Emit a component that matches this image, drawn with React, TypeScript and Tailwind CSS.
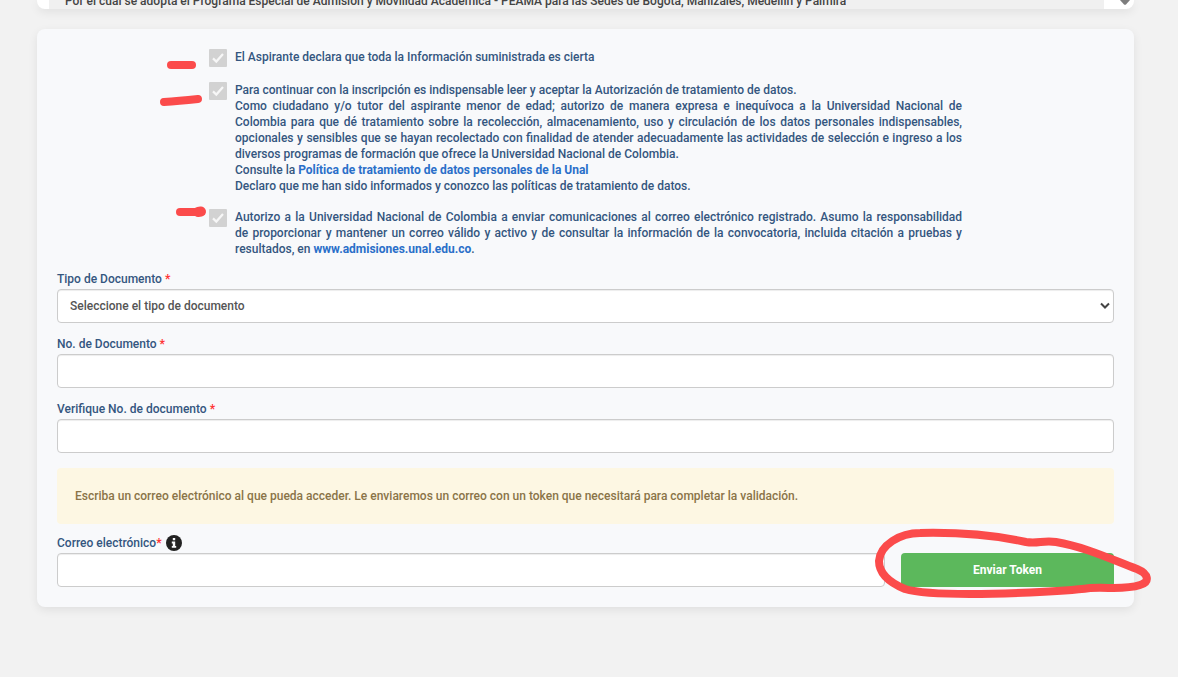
import { useState } from 'react';
import type { ReactNode } from 'react';

const fieldClass =
    'h-[34px] w-full rounded border border-[#ccc] bg-white text-[#555] shadow-[inset_0_1px_1px_rgba(0,0,0,0.075)]';

interface ConsentProps {
    id: string;
    children: ReactNode;
    mark: ReactNode;
}

function Consent({ id, children, mark }: ConsentProps) {
    return (
        <div className="relative flex items-start gap-2">
            {mark}
            <span className="relative size-[18px] shrink-0">
                <input
                    id={id}
                    type="checkbox"
                    defaultChecked
                    disabled
                    className="block size-[18px] appearance-none rounded-[1px] bg-[#d2d2d2]"
                />
                <svg viewBox="0 0 18 18" className="pointer-events-none absolute inset-0 size-[18px]" fill="none">
                    <path d="M4 9.4 L7.3 12.6 L14 5" stroke="#f7f7f7" strokeWidth="2.2" />
                </svg>
            </span>
            <div className="min-w-0 flex-1 text-justify">{children}</div>
        </div>
    );
}

interface FieldLabelProps {
    htmlFor: string;
    children: ReactNode;
}

function FieldLabel({ htmlFor, children }: FieldLabelProps) {
    return (
        <label htmlFor={htmlFor} className="mb-0.5 block">
            {children} <span className="font-bold text-[#f33]">*</span>
        </label>
    );
}

export default function App() {
    const [documentType, setDocumentType] = useState('');
    const [documentNumber, setDocumentNumber] = useState('');
    const [documentCheck, setDocumentCheck] = useState('');
    const [email, setEmail] = useState('');

    return (
        <main className="min-h-screen bg-[#f2f2f2] pr-11 pb-8 pl-[37px] font-['Roboto',sans-serif] text-[12px] leading-4 font-medium text-[#34567f]">
            {/* Selected call, cut by the top of the page */}
            <section className="flex h-[9px] items-end rounded-b-lg bg-white shadow-[0_3px_10px_rgba(0,0,0,0.08)]">
                <div className="ml-3 flex h-[9px] min-w-0 flex-1 items-end overflow-hidden bg-[#f0f0f0] px-4 text-[#444]">
                    <p className="truncate">
                        Por el cual se adopta el Programa Especial de Admisión y Movilidad Académica - PEAMA para las Sedes de Bogotá, Manizales, Medellín y Palmira
                    </p>
                </div>
                <div className="flex h-[9px] w-[30px] items-start justify-end pr-1">
                    <svg width="10" height="5" viewBox="0 0 10 5">
                        <path d="M0 0 H10 L6 4.5 Q5 5.2 4 4.5 Z" fill="#7d7d7d" />
                    </svg>
                </div>
            </section>

            <form
                onSubmit={(e) => e.preventDefault()}
                className="mt-5 rounded-lg bg-[#f8f9fb] p-5 shadow-[0_3px_10px_rgba(0,0,0,0.08)]"
            >
                {/* Consents */}
                <div className="flex flex-col gap-[15px] px-[152px]">
                    <Consent
                        id="truth"
                        mark={
                            <svg width="32" height="12" viewBox="0 0 32 12" className="absolute top-[10px] -left-[43px]">
                                <path d="M5 6 H26" stroke="#fb4b4b" strokeWidth="8" strokeLinecap="round" />
                            </svg>
                        }
                    >
                        <label htmlFor="truth">El Aspirante declara que toda la Información suministrada es cierta</label>
                    </Consent>
                    <Consent
                        id="privacy"
                        mark={
                            <svg width="46" height="14" viewBox="0 0 46 14" className="absolute top-[12px] -left-[51px]">
                                <path d="M6 8 Q20 7 40 5" stroke="#fb4b4b" strokeWidth="8" strokeLinecap="round" fill="none" />
                            </svg>
                        }
                    >
                        <label htmlFor="privacy">
                            Para continuar con la inscripción es indispensable leer y aceptar la Autorización de tratamiento de datos.
                        </label>
                        <p>
                            Como ciudadano y/o tutor del aspirante menor de edad; autorizo de manera expresa e inequívoca a la Universidad Nacional de Colombia para que dé tratamiento sobre la recolección, almacenamiento, uso y circulación de los datos personales indispensables, opcionales y sensibles que se hayan recolectado con finalidad de atender adecuadamente las actividades de selección e ingreso a los diversos programas de formación que ofrece la Universidad Nacional de Colombia.
                        </p>
                        <p>
                            Consulte la{' '}
                            <a href="#politica" className="font-bold text-[#2a6fc9]">
                                Política de tratamiento de datos personales de la Unal
                            </a>
                        </p>
                        <p>Declaro que me han sido informados y conozco las políticas de tratamiento de datos.</p>
                    </Consent>
                    <Consent
                        id="mailing"
                        mark={
                            <svg width="34" height="14" viewBox="0 0 34 14" className="absolute -top-1 -left-[35px]">
                                <path d="M6 7 H24" stroke="#fb4b4b" strokeWidth="8" strokeLinecap="round" />
                                <path d="M24 7 L27 6.5" stroke="#fb4b4b" strokeWidth="10" strokeLinecap="round" />
                            </svg>
                        }
                    >
                        <label htmlFor="mailing">
                            Autorizo a la Universidad Nacional de Colombia a enviar comunicaciones al correo electrónico registrado. Asumo la responsabilidad{' '}
                            <span className="whitespace-nowrap">de proporcionar</span> y mantener un correo válido y activo y de consultar la información de la convocatoria, incluida citación a pruebas y resultados, en{' '}
                            <a href="#admisiones" className="font-bold text-[#2a6fc9]">
                                www.admisiones.unal.edu.co
                            </a>
                            .
                        </label>
                    </Consent>
                </div>

                {/* Document */}
                <div className="mt-[14px] space-y-[13px]">
                    <div>
                        <FieldLabel htmlFor="documentType">Tipo de Documento</FieldLabel>
                        <div className="relative">
                            <select
                                id="documentType"
                                value={documentType}
                                onChange={(e) => setDocumentType(e.target.value)}
                                className={`${fieldClass} block appearance-none px-3`}
                            >
                                <option value="">Seleccione el tipo de documento</option>
                                <option value="CC">Cédula de ciudadanía</option>
                                <option value="TI">Tarjeta de identidad</option>
                            </select>
                            <svg
                                width="10"
                                height="8"
                                viewBox="0 0 10 8"
                                fill="none"
                                className="pointer-events-none absolute top-[13px] right-1"
                            >
                                <path d="M1 1.5 L5 5.5 L9 1.5" stroke="#444" strokeWidth="2" />
                            </svg>
                        </div>
                    </div>
                    <div>
                        <FieldLabel htmlFor="documentNumber">No. de Documento</FieldLabel>
                        <input
                            id="documentNumber"
                            value={documentNumber}
                            onChange={(e) => setDocumentNumber(e.target.value)}
                            className={`${fieldClass} block px-3`}
                        />
                    </div>
                    <div>
                        <FieldLabel htmlFor="documentCheck">Verifique No. de documento</FieldLabel>
                        <input
                            id="documentCheck"
                            value={documentCheck}
                            onChange={(e) => setDocumentCheck(e.target.value)}
                            className={`${fieldClass} block px-3`}
                        />
                    </div>
                </div>

                <div className="mt-[15px] rounded bg-[#fdf7e3] px-[18px] py-5 text-[#8a7448]">
                    Escriba un correo electrónico al que pueda acceder. Le enviaremos un correo con un token que necesitará para completar la validación.
                </div>

                {/* Email */}
                <div className="mt-[11px] flex items-end gap-4">
                    <div className="min-w-0 flex-1">
                        <div className="mb-0.5 flex items-center gap-1">
                            <label htmlFor="email">
                                Correo electrónico<span className="font-bold text-[#f33]">*</span>
                            </label>
                            <svg width="16" height="16" viewBox="0 0 16 16">
                                <circle cx="8" cy="8" r="8" fill="#222" />
                                <path d="M6.8 3 H9.2 V5.3 H6.8 Z M5.8 6.6 H9.2 V11 H10.2 V12.8 H5.8 V11 H6.8 V8.4 H5.8 Z" fill="#f8f9fb" />
                            </svg>
                        </div>
                        <input
                            id="email"
                            type="email"
                            value={email}
                            onChange={(e) => setEmail(e.target.value)}
                            className={`${fieldClass} block px-3`}
                        />
                    </div>
                    <div className="relative w-[213px] shrink-0">
                        <button type="submit" className="block h-[34px] w-full rounded bg-[#5cb85c] font-bold text-white">
                            Enviar Token
                        </button>
                        <svg
                            width="285"
                            height="80"
                            viewBox="870 523 285 80"
                            fill="none"
                            className="pointer-events-none absolute -top-[30px] -right-[41px] max-w-none"
                        >
                            <path
                                d="M920 533 C965 532 1003 537 1026 542 C1038 544 1043 540 1056 542 C1085 547 1108 558 1137 569 C1149 574 1150 582 1140 585 C1125 590 1110 587 1090 588 C1060 592 1000 594 970 594 C940 594 915 592 905 589 C888 582 879 572 879 561 C880 545 900 533 920 533 Z"
                                stroke="#fb4b4b"
                                strokeWidth="8"
                                strokeLinejoin="round"
                            />
                        </svg>
                    </div>
                </div>
            </form>
        </main>
    );
}
